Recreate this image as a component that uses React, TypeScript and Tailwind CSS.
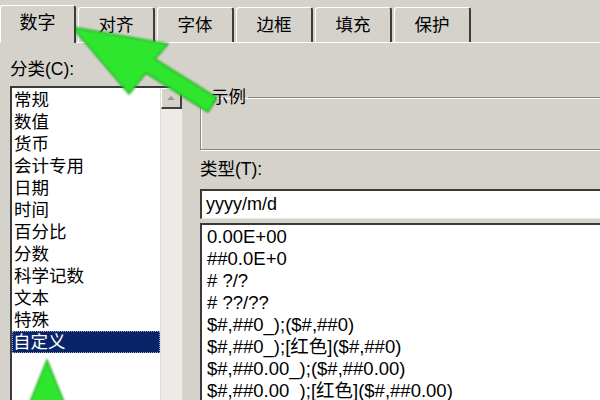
import React from 'react';

const tabs = ['数字', '对齐', '字体', '边框', '填充', '保护'];

const categories = [
  '常规',
  '数值',
  '货币',
  '会计专用',
  '日期',
  '时间',
  '百分比',
  '分数',
  '科学记数',
  '文本',
  '特殊',
  '自定义',
];

const formats = [
  '0.00E+00',
  '##0.0E+0',
  '# ?/?',
  '# ??/??',
  '$#,##0_);($#,##0)',
  '$#,##0_);[红色]($#,##0)',
  '$#,##0.00_);($#,##0.00)',
  '$#,##0.00_);[红色]($#,##0.00)',
];

const font = "font-['Liberation_Sans','Noto_Sans_CJK_SC',sans-serif]";

export default function App() {
  return (
    <div className={`relative w-[600px] h-[400px] overflow-hidden bg-[#d5d2cc] text-black ${font}`}>
      {/* Tab strip */}
      <div className="flex items-end h-[43px] border-b border-white pr-2">
        {tabs.map((tab, i) => (
          <div
            key={tab}
            className={
              i === 0
                ? 'relative z-10 -mb-px shrink-0 flex items-center justify-center w-[76px] h-[38px] bg-[#d5d2cc] border-t border-l border-white border-r-2 border-r-[#3c3c3c] rounded-t-[3px] text-[18px] pb-[2px]'
                : 'shrink-0 flex items-center justify-center w-[77px] ml-[2px] h-[35px] border-t border-l border-white border-r-2 border-r-[#3c3c3c] rounded-t-[3px] text-[17.5px]'
            }
          >
            {tab}
          </div>
        ))}
      </div>

      <div className="flex">
        {/* Left column */}
        <div className="ml-[10px] w-[172px] shrink-0 flex flex-col">
          <div className="mt-[16px] h-[20px] leading-[20px] text-[17.5px]">分类(C):</div>
          <div className="mt-[7px] h-[330px] flex border-t-2 border-l-2 border-t-[#3a3a3a] border-l-[#3a3a3a] bg-white">
            <div className="flex-1 pt-[1px]">
              {categories.map((c) => (
                <div
                  key={c}
                  className={
                    c === '自定义'
                      ? 'h-[22px] leading-[22px] text-[17.5px] pl-[1px] bg-[#0a246a] text-white outline-1 outline-dotted outline-[#9aa6c8] -outline-offset-1'
                      : 'h-[22px] leading-[22px] text-[17.5px] pl-[2px]'
                  }
                >
                  {c}
                </div>
              ))}
            </div>
            <div className="w-[22px] flex flex-col bg-[#ecebe7] border-l border-[#e0ded9]">
              <div className="h-[21px] flex items-center justify-center bg-[#d5d2cc] border-t border-l border-white border-r-2 border-b-2 border-r-[#404040] border-b-[#404040]">
                <div className="w-0 h-0 border-l-[4px] border-r-[4px] border-b-[4px] border-l-transparent border-r-transparent border-b-[#9a9893]" />
              </div>
            </div>
          </div>
        </div>

        {/* Right column */}
        <div className="ml-[18px] w-[420px] shrink-0 flex flex-col">
          <fieldset className="mt-[44px] h-[63px] border border-[#8a8782] shadow-[inset_1px_1px_0_#fff,1px_1px_0_#fff]">
            <legend className="ml-[8px] px-[2px] text-[17.5px] leading-[20px]">示例</legend>
          </fieldset>
          <div className="mt-[9px] h-[20px] leading-[20px] text-[17.5px]">类型(T):</div>
          <div className="mt-[10px] h-[30px] bg-white border-t-2 border-l-2 border-t-[#3a3a3a] border-l-[#3a3a3a] border-b border-b-[#e8e6e2] flex items-center pl-[4px] text-[18px]">
            yyyy/m/d
          </div>
          <div className="mt-[4px] h-[200px] bg-white border-t-2 border-l-2 border-t-[#3a3a3a] border-l-[#3a3a3a] pl-[5px] pt-[1px]">
            {formats.map((f) => (
              <div key={f} className="h-[22px] leading-[22px] text-[18.5px] whitespace-nowrap">
                {f}
              </div>
            ))}
          </div>
        </div>
      </div>

      {/* Green annotation arrows */}
      <svg className="absolute inset-0 pointer-events-none" width="600" height="400" viewBox="0 0 600 400">
        <defs>
          <filter id="soft" x="-10%" y="-10%" width="120%" height="120%">
            <feGaussianBlur stdDeviation="1.2" />
          </filter>
        </defs>
        <g filter="url(#soft)">
          <polygon
            points="72,27 168,44 155,59 217,98 208,112 146,73 129,94"
            fill="#2ee62e"
            stroke="#22b022"
            strokeWidth="1.5"
            strokeLinejoin="round"
          />
          <polygon points="47,360 68,412 26,412" fill="#2ee62e" stroke="#22b022" strokeWidth="1.5" />
        </g>
      </svg>
    </div>
  );
}
